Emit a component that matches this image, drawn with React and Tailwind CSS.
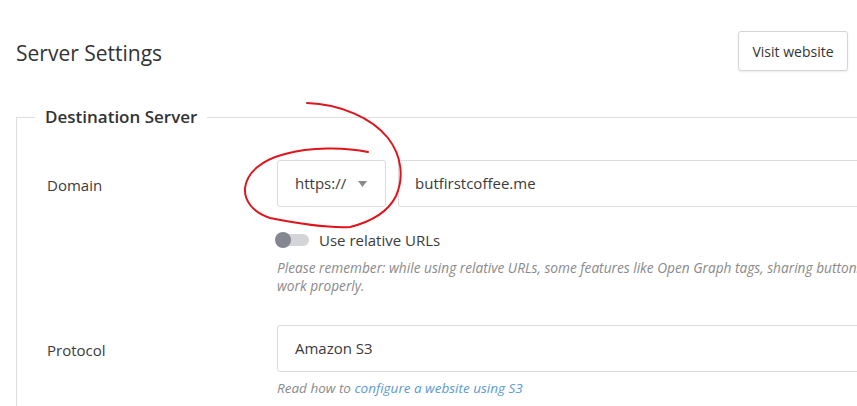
import React from "react";

export default function App() {
  return (
    <div className="relative w-[857px] h-[406px] overflow-hidden bg-white text-[#3b3b3b]" style={{ fontFamily: '"Open Sans", "Noto Sans", sans-serif' }}>
      <div className="flex items-center justify-between pl-4 pr-[9px] pt-[31px]">
        <h1 className="translate-y-[2px] text-[21px] leading-[40px] text-[#333]">Server Settings</h1>
        <button className="h-[40px] w-[110px] rounded-[3px] border border-[#d4d4d4] bg-white text-[14px] text-[#333] shadow-[0_1px_2px_rgba(0,0,0,0.08)]">
          Visit website
        </button>
      </div>

      <fieldset className="ml-4 mt-[34px] w-[900px] border border-[#dedede] pb-10">
        <legend className="ml-[18px] px-[10px] text-[17px] font-semibold leading-[24px] text-[#333]">Destination Server</legend>

        <div className="pl-[30px] pt-[31px]">
          <div className="flex">
            <div className="flex h-[47px] w-[230px] items-center pt-1 text-[15px]">Domain</div>
            <div className="flex flex-1 flex-col">
              <div className="flex gap-3">
                <div className="flex h-[47px] w-[109px] items-center justify-between rounded-[3px] border border-[#dcdcdc] pl-[17px] pr-[18px] text-[15px]">
                  <span>https://</span>
                  <svg width="9" height="6" viewBox="0 0 9 6"><path d="M0 0h9L4.5 6z" fill="#8a8a8a" /></svg>
                </div>
                <div className="flex h-[47px] flex-1 items-center rounded-[3px] border border-[#dcdcdc] pl-4 text-[15px]">butfirstcoffee.me</div>
              </div>
              <div className="mt-[23px] ml-[-2px] flex h-5 items-center">
                <div className="relative h-4 w-[34px]">
                  <div className="absolute left-[8px] right-0 top-[2px] h-3 rounded-full bg-[#d3d5d9]" />
                  <div className="absolute left-0 top-0 h-4 w-4 rounded-full bg-[#84878f]" />
                </div>
                <span className="ml-[10px] text-[15px]">Use relative URLs</span>
              </div>
              <p className="mt-[9px] whitespace-nowrap text-[13.7px] italic leading-[18px] text-[#8a8a8a]">
                Please remember: while using relative URLs, some features like Open Graph tags, sharing buttons and others may not
                <br />
                work properly.
              </p>
            </div>
          </div>

          <div className="mt-[30px] flex">
            <div className="flex h-[47px] w-[230px] items-center pt-1 text-[15px]">Protocol</div>
            <div className="flex flex-1 flex-col">
              <div className="flex h-[47px] items-center rounded-[3px] border border-[#dcdcdc] pl-[17px] text-[15px]">Amazon S3</div>
              <p className="mt-[7px] text-[13.5px] italic leading-[18px] text-[#8a8a8a]">
                Read how to <span className="text-[#5b9bd0]">configure a website using S3</span>
              </p>
            </div>
          </div>
        </div>
      </fieldset>

      <svg className="pointer-events-none absolute left-0 top-0" width="857" height="406" viewBox="0 0 857 406">
        <path
          d="M307 103 C 340 104, 372 118, 388 138 C 402 156, 404 178, 396 196 C 388 212, 370 222, 350 227 C 330 228, 300 224, 270 218 C 252 212, 244 200, 245 188 C 247 172, 262 160, 285 154 C 310 147, 345 147, 368 152"
          fill="none"
          stroke="#e0141c"
          strokeWidth="2"
          strokeLinecap="round"
        />
      </svg>
    </div>
  );
}
